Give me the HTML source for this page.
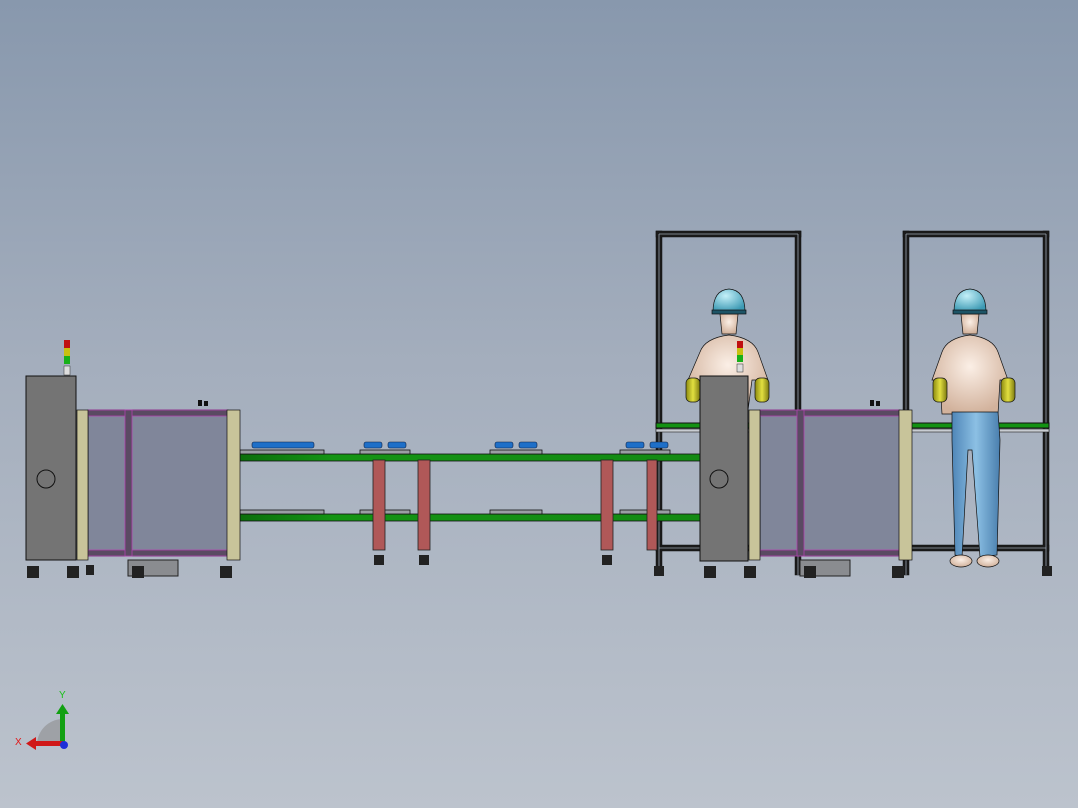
<!DOCTYPE html>
<html><head><style>
html,body{margin:0;padding:0;width:1078px;height:808px;overflow:hidden;}
body{background:linear-gradient(#8898ad 0%,#a4aebd 45%,#bcc3cd 100%);}
svg{position:absolute;left:0;top:0}
text{font-family:"Liberation Sans",sans-serif}
</style></head><body>
<svg width="1078" height="808" viewBox="0 0 1078 808">
<defs>
<radialGradient id="skin" cx="0.5" cy="0.4" r="0.6"><stop offset="0" stop-color="#fbefe6"/><stop offset="1" stop-color="#d2b29c"/></radialGradient>
<radialGradient id="helm" cx="0.4" cy="0.3" r="0.7"><stop offset="0" stop-color="#c4f0f8"/><stop offset="1" stop-color="#3d9ab4"/></radialGradient>
<linearGradient id="jean" x1="0" x2="1"><stop offset="0" stop-color="#4f86b8"/><stop offset="0.5" stop-color="#8cc0e4"/><stop offset="1" stop-color="#4a7fae"/></linearGradient>
<linearGradient id="glove" x1="0" x2="1"><stop offset="0" stop-color="#8b8a10"/><stop offset="0.5" stop-color="#e2df40"/><stop offset="1" stop-color="#7d7a10"/></linearGradient>
<linearGradient id="grn" x1="0" x2="1"><stop offset="0" stop-color="#0b6e0b"/><stop offset="0.2" stop-color="#149414"/><stop offset="1" stop-color="#138a13"/></linearGradient>
</defs>

<!-- frames right (behind) -->
<g fill="#1a1a1a" stroke="#111" stroke-width=".5">
<rect x="656" y="231" width="6" height="344"/>
<rect x="795" y="231" width="6" height="344"/>
<rect x="656" y="231" width="145" height="6"/>
<rect x="903" y="231" width="6" height="344"/>
<rect x="1043" y="231" width="6" height="344"/>
<rect x="903" y="231" width="146" height="6"/>
<rect x="656" y="545" width="145" height="6"/>
<rect x="903" y="545" width="146" height="6"/>
</g>
<g stroke="#9aa4b2" stroke-width=".8">
<line x1="659" y1="234" x2="659" y2="575"/><line x1="798" y1="234" x2="798" y2="575"/>
<line x1="659" y1="234" x2="798" y2="234"/>
<line x1="906" y1="234" x2="906" y2="575"/><line x1="1046" y1="234" x2="1046" y2="575"/>
<line x1="906" y1="234" x2="1046" y2="234"/>
<line x1="659" y1="548" x2="798" y2="548"/><line x1="906" y1="548" x2="1046" y2="548"/>
</g>
<rect x="656" y="423" width="145" height="5" fill="#139213" stroke="#111"/>
<rect x="903" y="423" width="146" height="5" fill="#139213" stroke="#111"/>
<rect x="656" y="429" width="145" height="3" fill="#c8ccd2" stroke="#222" stroke-width=".6"/>
<rect x="903" y="429" width="146" height="3" fill="#c8ccd2" stroke="#222" stroke-width=".6"/>

<!-- person 1 -->
<g stroke="#111" stroke-width=".7">
<path d="M700 352 Q705 338 729 335 Q753 338 758 352 L768 380 L752 380 L748 410 L708 410 L704 380 L688 380 Z" fill="url(#skin)"/>
<path d="M720 314 L738 314 L736 334 L722 334 Z" fill="url(#skin)"/>
<path d="M713 312 Q713 290 729 289 Q745 290 745 312 Z" fill="url(#helm)"/>
<rect x="712" y="310" width="34" height="4" fill="#1d5466"/>
<rect x="686" y="378" width="14" height="24" rx="5" fill="url(#glove)"/>
<rect x="755" y="378" width="14" height="24" rx="5" fill="url(#glove)"/>
</g>
<!-- person 2 -->
<g stroke="#111" stroke-width=".7">
<path d="M942 352 Q947 338 970 335 Q993 338 998 352 L1008 380 L1000 380 L998 414 L942 414 L940 380 L932 380 Z" fill="url(#skin)"/>
<path d="M961 314 L979 314 L977 334 L963 334 Z" fill="url(#skin)"/>
<path d="M954 312 Q954 290 970 289 Q986 290 986 312 Z" fill="url(#helm)"/>
<rect x="953" y="310" width="34" height="4" fill="#1d5466"/>
<rect x="933" y="378" width="14" height="24" rx="5" fill="url(#glove)"/>
<rect x="1001" y="378" width="14" height="24" rx="5" fill="url(#glove)"/>
<path d="M952 412 L998 412 L1000 440 L997 555 L980 557 L972 450 L968 450 L962 557 L955 555 L952 440 Z" fill="url(#jean)"/>
<ellipse cx="961" cy="561" rx="11" ry="6" fill="url(#skin)"/>
<ellipse cx="988" cy="561" rx="11" ry="6" fill="url(#skin)"/>
</g>

<!-- conveyors -->
<g stroke="#111" stroke-width=".8">
<rect x="240" y="454" width="460" height="7" fill="url(#grn)"/>
<rect x="240" y="514" width="460" height="7" fill="url(#grn)"/>
<rect x="240" y="450" width="84" height="4" fill="#9a9ea4"/>
<rect x="360" y="450" width="50" height="4" fill="#9a9ea4"/>
<rect x="490" y="450" width="52" height="4" fill="#9a9ea4"/>
<rect x="620" y="450" width="50" height="4" fill="#9a9ea4"/>
<rect x="240" y="510" width="84" height="4" fill="#9a9ea4"/>
<rect x="360" y="510" width="50" height="4" fill="#9a9ea4"/>
<rect x="490" y="510" width="52" height="4" fill="#9a9ea4"/>
<rect x="620" y="510" width="50" height="4" fill="#9a9ea4"/>
</g>
<g fill="#1e6fc8" stroke="#102040" stroke-width=".6">
<rect x="252" y="442" width="62" height="6" rx="2"/>
<rect x="364" y="442" width="18" height="6" rx="2"/><rect x="388" y="442" width="18" height="6" rx="2"/>
<rect x="495" y="442" width="18" height="6" rx="2"/><rect x="519" y="442" width="18" height="6" rx="2"/>
<rect x="626" y="442" width="18" height="6" rx="2"/><rect x="650" y="442" width="18" height="6" rx="2"/>
</g>
<g fill="#b05858" stroke="#222" stroke-width=".8">
<rect x="373" y="460" width="12" height="90"/>
<rect x="418" y="460" width="12" height="90"/>
<rect x="601" y="460" width="12" height="90"/>
<rect x="647" y="460" width="10" height="90"/>
</g>
<g fill="#222">
<rect x="374" y="555" width="10" height="10"/><rect x="419" y="555" width="10" height="10"/>
<rect x="602" y="555" width="10" height="10"/><rect x="654" y="566" width="10" height="10"/>
<rect x="1042" y="566" width="10" height="10"/>
</g>

<!-- left cabinet -->
<rect x="26" y="376" width="50" height="184" fill="#747474" stroke="#111"/>
<circle cx="46" cy="479" r="9" fill="none" stroke="#111"/>
<rect x="64" y="340" width="6" height="8" fill="#c01010"/><rect x="64" y="348" width="6" height="8" fill="#c8c010"/><rect x="64" y="356" width="6" height="8" fill="#18b018"/>
<rect x="64" y="366" width="6" height="9" fill="#ddd" stroke="#333" stroke-width=".5"/>
<!-- left machine -->
<rect x="88" y="410" width="140" height="146" fill="#80869a" stroke="#111"/>
<rect x="88" y="410" width="140" height="6" fill="#5a4a62" stroke="#b040b0" stroke-width=".8"/>
<rect x="88" y="550" width="140" height="6" fill="#5a4a62" stroke="#b040b0" stroke-width=".8"/>
<rect x="125" y="410" width="7" height="146" fill="#5a4a62" stroke="#b040b0" stroke-width=".8"/>
<rect x="77" y="410" width="11" height="150" fill="#c8c49a" stroke="#111" stroke-width=".7"/>
<rect x="227" y="410" width="13" height="150" fill="#c8c49a" stroke="#111" stroke-width=".7"/>
<rect x="128" y="560" width="50" height="16" fill="#8a8c90" stroke="#222"/>
<g fill="#222"><rect x="27" y="566" width="12" height="12"/><rect x="67" y="566" width="12" height="12"/><rect x="132" y="566" width="12" height="12"/><rect x="220" y="566" width="12" height="12"/><rect x="86" y="565" width="8" height="10"/></g>

<!-- right cabinet -->
<rect x="700" y="376" width="48" height="185" fill="#747474" stroke="#111"/>
<circle cx="719" cy="479" r="9" fill="none" stroke="#111"/>
<rect x="737" y="341" width="6" height="7" fill="#c01010"/><rect x="737" y="348" width="6" height="7" fill="#c8c010"/><rect x="737" y="355" width="6" height="7" fill="#18b018"/>
<rect x="737" y="364" width="6" height="8" fill="#ddd" stroke="#333" stroke-width=".5"/>
<!-- right machine -->
<rect x="760" y="410" width="140" height="146" fill="#80869a" stroke="#111"/>
<rect x="760" y="410" width="140" height="6" fill="#5a4a62" stroke="#b040b0" stroke-width=".8"/>
<rect x="760" y="550" width="140" height="6" fill="#5a4a62" stroke="#b040b0" stroke-width=".8"/>
<rect x="797" y="410" width="7" height="146" fill="#5a4a62" stroke="#b040b0" stroke-width=".8"/>
<rect x="749" y="410" width="11" height="150" fill="#c8c49a" stroke="#111" stroke-width=".7"/>
<rect x="899" y="410" width="13" height="150" fill="#c8c49a" stroke="#111" stroke-width=".7"/>
<rect x="800" y="560" width="50" height="16" fill="#8a8c90" stroke="#222"/>
<g fill="#222"><rect x="704" y="566" width="12" height="12"/><rect x="744" y="566" width="12" height="12"/><rect x="804" y="566" width="12" height="12"/><rect x="892" y="566" width="12" height="12"/></g>
<g fill="#111"><rect x="198" y="400" width="4" height="6"/><rect x="204" y="401" width="4" height="5"/><rect x="870" y="400" width="4" height="6"/><rect x="876" y="401" width="4" height="5"/></g>

<!-- triad -->
<path d="M37 745 A26 26 0 0 1 63 719 L63 745 Z" fill="#9ea1a6"/>
<rect x="60" y="712" width="5" height="33" fill="#12a012"/>
<path d="M56 714 L62.5 704 L69 714 Z" fill="#12a012"/>
<rect x="33" y="741" width="30" height="5" fill="#d01818"/>
<path d="M36 737 L26 743.5 L36 750 Z" fill="#d01818"/>
<circle cx="64" cy="745" r="4" fill="#1f2fd8"/>
<text x="59" y="698" font-size="10" fill="#18c018">Y</text>
<text x="15" y="745" font-size="10" fill="#e01818">X</text>
</svg>
</body></html>
